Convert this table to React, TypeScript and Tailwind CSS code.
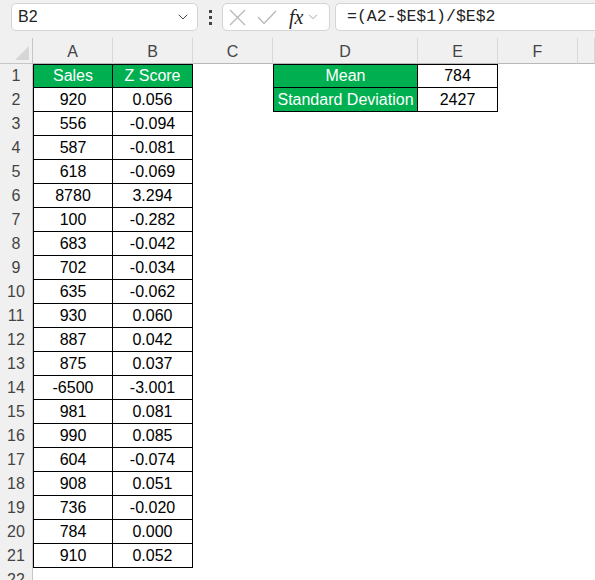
import { ChevronDown } from "lucide-react";

const sales = [920, 556, 587, 618, 8780, 100, 683, 702, 635, 930, 887, 875, -6500, 981, 990, 604, 908, 736, 784, 910];
const zScores = [
  "0.056", "-0.094", "-0.081", "-0.069", "3.294", "-0.282", "-0.042", "-0.034", "-0.062", "0.060",
  "0.042", "0.037", "-3.001", "0.081", "0.085", "-0.074", "0.051", "-0.020", "0.000", "0.052",
];

const cols = ["A", "B", "C", "D", "E", "F", ""];
const font = { fontFamily: '"Liberation Sans", Arial, sans-serif' };

function Cell({ children, kind, first, top }: { children?: React.ReactNode; kind?: "green" | "white"; first?: boolean; top?: boolean }) {
  if (!kind) return <div className="h-[24px]" />;
  return (
    <div
      className={
        "flex h-[24px] items-center justify-center whitespace-nowrap border-r border-b border-black text-[16px] " +
        (kind === "green" ? "bg-[#00b050] text-white " : "bg-white text-black ") +
        (first ? "border-l " : "") +
        (top ? "border-t " : "")
      }
    >
      {children}
    </div>
  );
}

export default function App() {
  const rows = Array.from({ length: 23 }, (_, i) => i + 1);

  return (
    <div className="h-[580px] w-[595px] overflow-hidden bg-white" style={font}>
      {/* formula bar */}
      <div className="flex h-[38px] items-start bg-[#f0f0f0] pt-[3px]">
        <div className="ml-[11px] flex h-[28px] w-[187px] items-center justify-between rounded-[5px] border border-[#d4d4d4] bg-white pl-[6px] pr-[6px]">
          <span className="text-[16px] text-[#222]">B2</span>
          <ChevronDown size={16} strokeWidth={1.5} className="text-[#444]" />
        </div>
        <div className="ml-[11px] mr-[10px] flex h-[28px] flex-col items-center justify-center gap-[3px]">
          <span className="h-[3px] w-[3px] bg-[#444]" />
          <span className="h-[3px] w-[3px] bg-[#444]" />
          <span className="h-[3px] w-[3px] bg-[#444]" />
        </div>
        <div className="flex h-[28px] w-[108px] items-center rounded-[5px] border border-[#d4d4d4] bg-white pl-[6px]">
          <svg width="17" height="17" viewBox="0 0 17 17" className="text-[#b8b8b8]">
            <path d="M1 1 L16 16 M16 1 L1 16" stroke="currentColor" strokeWidth="1.3" fill="none" />
          </svg>
          <svg width="20" height="15" viewBox="0 0 20 15" className="ml-[11px] text-[#b8b8b8]">
            <path d="M1 7 L7 13.5 L19 1" stroke="currentColor" strokeWidth="1.3" fill="none" />
          </svg>
          <span
            className="ml-[12px] text-[20px] italic text-[#222]"
            style={{ fontFamily: '"Liberation Serif", "Times New Roman", serif' }}
          >
            fx
          </span>
          <ChevronDown size={14} strokeWidth={1.3} className="ml-[3px] text-[#888]" />
        </div>
        <div className="ml-[5px] flex h-[28px] flex-1 items-center rounded-l-[5px] border border-r-0 border-[#d4d4d4] bg-white pl-[11px]">
          <span className="text-[16.5px] text-[#222]" style={{ fontFamily: '"Liberation Mono", "Courier New", monospace' }}>
            =(A2-$E$1)/$E$2
          </span>
        </div>
      </div>

      {/* sheet */}
      <div className="grid grid-cols-[33px_80px_80px_80px_145px_80px_80px_1fr]">
        {/* column headers */}
        <div className="relative h-[26px] border-r border-b border-[#c6c6c6] bg-[#f0f0f0]">
          <div className="absolute bottom-[3px] right-[3px] h-0 w-0 border-b-[14px] border-l-[14px] border-b-[#d6d6d6] border-l-transparent" />
        </div>
        {cols.map((c, i) => (
          <div
            key={i}
            className="flex h-[26px] items-center justify-center border-r border-b border-r-[#d8d8d8] border-b-[#b8b8b8] bg-[#f0f0f0] pt-[2px] text-[16px] text-[#444]"
          >
            {c}
          </div>
        ))}

        {rows.map((r) => {
          const idx = r - 2;
          return [
            <div
              key={`h${r}`}
              className="flex h-[24px] items-center justify-center border-r border-[#c6c6c6] bg-[#f0f0f0] text-[16px] text-[#444]"
            >
              {r}
            </div>,
            r === 1 ? (
              <Cell key={`a${r}`} kind="green" first top>Sales</Cell>
            ) : r <= 21 ? (
              <Cell key={`a${r}`} kind="white" first>{sales[idx]}</Cell>
            ) : (
              <Cell key={`a${r}`} />
            ),
            r === 1 ? (
              <Cell key={`b${r}`} kind="green" top>Z Score</Cell>
            ) : r <= 21 ? (
              <Cell key={`b${r}`} kind="white">{zScores[idx]}</Cell>
            ) : (
              <Cell key={`b${r}`} />
            ),
            <Cell key={`c${r}`} />,
            r === 1 ? (
              <Cell key={`d${r}`} kind="green" first top>Mean</Cell>
            ) : r === 2 ? (
              <Cell key={`d${r}`} kind="green" first>Standard Deviation</Cell>
            ) : (
              <Cell key={`d${r}`} />
            ),
            r === 1 ? (
              <Cell key={`e${r}`} kind="white" top>784</Cell>
            ) : r === 2 ? (
              <Cell key={`e${r}`} kind="white">2427</Cell>
            ) : (
              <Cell key={`e${r}`} />
            ),
            <Cell key={`f${r}`} />,
            <Cell key={`g${r}`} />,
          ];
        })}
      </div>
    </div>
  );
}
